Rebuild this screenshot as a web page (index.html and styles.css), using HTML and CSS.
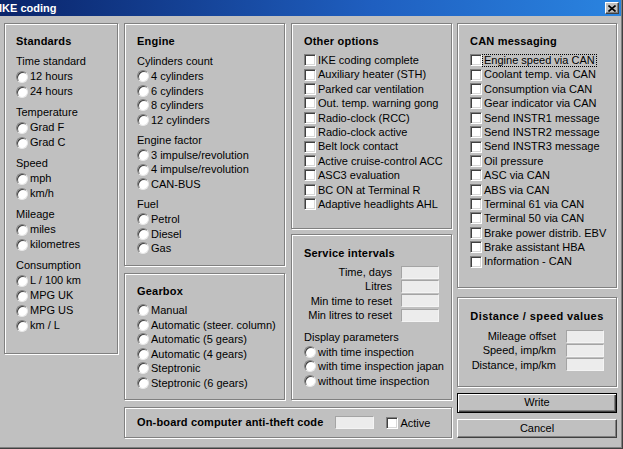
FILE: index.html
```html
<!DOCTYPE html>
<html>
<head>
<meta charset="utf-8">
<link rel="stylesheet" href="styles.css">
</head>
<body>
<div class="window">
  <div class="titlebar">
    <span class="title">IKE coding</span>
    <span class="close"><svg width="8" height="7" viewBox="0 0 8 7"><path d="M0.5 0.5 L7.5 6.5 M7.5 0.5 L0.5 6.5" stroke="#000" stroke-width="1.6" fill="none"/></svg></span>
  </div>
  <div class="client">
    <div class="col col1">
      <div class="group standards">
        <div class="heading">Standards</div>
        <div class="label">Time standard</div>
        <div class="row"><span class="radio"></span>12 hours</div>
        <div class="row"><span class="radio"></span>24 hours</div>
        <div class="label">Temperature</div>
        <div class="row"><span class="radio"></span>Grad F</div>
        <div class="row"><span class="radio"></span>Grad C</div>
        <div class="label">Speed</div>
        <div class="row"><span class="radio"></span>mph</div>
        <div class="row"><span class="radio"></span>km/h</div>
        <div class="label">Mileage</div>
        <div class="row"><span class="radio"></span>miles</div>
        <div class="row"><span class="radio"></span>kilometres</div>
        <div class="label">Consumption</div>
        <div class="row"><span class="radio"></span>L / 100 km</div>
        <div class="row"><span class="radio"></span>MPG UK</div>
        <div class="row"><span class="radio"></span>MPG US</div>
        <div class="row"><span class="radio"></span>km / L</div>
      </div>
    </div>
    <div class="mid">
      <div class="mid-top">
        <div class="col">
          <div class="group engine">
            <div class="heading">Engine</div>
            <div class="label">Cylinders count</div>
            <div class="row"><span class="radio"></span>4 cylinders</div>
            <div class="row"><span class="radio"></span>6 cylinders</div>
            <div class="row"><span class="radio"></span>8 cylinders</div>
            <div class="row"><span class="radio"></span>12 cylinders</div>
            <div class="label">Engine factor</div>
            <div class="row"><span class="radio"></span>3 impulse/revolution</div>
            <div class="row"><span class="radio"></span>4 impulse/revolution</div>
            <div class="row"><span class="radio"></span>CAN-BUS</div>
            <div class="label">Fuel</div>
            <div class="row"><span class="radio"></span>Petrol</div>
            <div class="row"><span class="radio"></span>Diesel</div>
            <div class="row"><span class="radio"></span>Gas</div>
          </div>
          <div class="group gearbox">
            <div class="heading">Gearbox</div>
            <div class="row"><span class="radio"></span>Manual</div>
            <div class="row"><span class="radio"></span>Automatic (steer. column)</div>
            <div class="row"><span class="radio"></span>Automatic (5 gears)</div>
            <div class="row"><span class="radio"></span>Automatic (4 gears)</div>
            <div class="row"><span class="radio"></span>Steptronic</div>
            <div class="row"><span class="radio"></span>Steptronic (6 gears)</div>
          </div>
        </div>
        <div class="col">
          <div class="group other">
            <div class="heading">Other options</div>
            <div class="checks">
              <div class="crow"><span class="check"></span>IKE coding complete</div>
              <div class="crow"><span class="check"></span>Auxiliary heater (STH)</div>
              <div class="crow"><span class="check"></span>Parked car ventilation</div>
              <div class="crow"><span class="check"></span>Out. temp. warning gong</div>
              <div class="crow"><span class="check"></span>Radio-clock (RCC)</div>
              <div class="crow"><span class="check"></span>Radio-clock active</div>
              <div class="crow"><span class="check"></span>Belt lock contact</div>
              <div class="crow"><span class="check"></span>Active cruise-control ACC</div>
              <div class="crow"><span class="check"></span>ASC3 evaluation</div>
              <div class="crow"><span class="check"></span>BC ON at Terminal R</div>
              <div class="crow"><span class="check"></span>Adaptive headlights AHL</div>
            </div>
          </div>
          <div class="group service">
            <div class="heading">Service intervals</div>
            <div class="fields">
              <div class="frow"><span class="flabel">Time, days</span><span class="field"></span></div>
              <div class="frow"><span class="flabel">Litres</span><span class="field"></span></div>
              <div class="frow"><span class="flabel">Min time to reset</span><span class="field"></span></div>
              <div class="frow"><span class="flabel">Min litres to reset</span><span class="field"></span></div>
            </div>
            <div class="label display">Display parameters</div>
            <div class="row"><span class="radio"></span>with time inspection</div>
            <div class="row"><span class="radio"></span>with time inspection japan</div>
            <div class="row"><span class="radio"></span>without time inspection</div>
          </div>
        </div>
      </div>
      <div class="group antitheft">
        <span class="heading">On-board computer anti-theft code</span>
        <span class="field code"></span>
        <span class="check"></span><span>Active</span>
      </div>
    </div>
    <div class="col col4">
      <div class="group can">
        <div class="heading">CAN messaging</div>
        <div class="checks">
          <div class="crow"><span class="check"></span><span class="focus">Engine speed via CAN</span></div>
          <div class="crow"><span class="check"></span>Coolant temp. via CAN</div>
          <div class="crow"><span class="check"></span>Consumption via CAN</div>
          <div class="crow"><span class="check"></span>Gear indicator via CAN</div>
          <div class="crow"><span class="check"></span>Send INSTR1 message</div>
          <div class="crow"><span class="check"></span>Send INSTR2 message</div>
          <div class="crow"><span class="check"></span>Send INSTR3 message</div>
          <div class="crow"><span class="check"></span>Oil pressure</div>
          <div class="crow"><span class="check"></span>ASC via CAN</div>
          <div class="crow"><span class="check"></span>ABS via CAN</div>
          <div class="crow"><span class="check"></span>Terminal 61 via CAN</div>
          <div class="crow"><span class="check"></span>Terminal 50 via CAN</div>
          <div class="crow"><span class="check"></span>Brake power distrib. EBV</div>
          <div class="crow"><span class="check"></span>Brake assistant HBA</div>
          <div class="crow"><span class="check"></span>Information - CAN</div>
        </div>
      </div>
      <div class="group distance">
        <div class="heading">Distance / speed values</div>
        <div class="fields">
          <div class="frow"><span class="flabel">Mileage offset</span><span class="field"></span></div>
          <div class="frow"><span class="flabel">Speed, imp/km</span><span class="field"></span></div>
          <div class="frow"><span class="flabel">Distance, imp/km</span><span class="field"></span></div>
        </div>
      </div>
      <div class="btn default">Write</div>
      <div class="btn cancel">Cancel</div>
    </div>
  </div>
</div>
</body>
</html>
```

FILE: styles.css
```css
html, body {
  margin: 0;
  padding: 0;
}
body {
  width: 623px;
  height: 449px;
  overflow: hidden;
  background: #c0c0c0;
  font-family: "Liberation Sans", Arial, sans-serif;
  font-size: 11px;
  color: #000;
}
.window {
  width: 623px;
  height: 449px;
  box-sizing: border-box;
  background: #c0c0c0;
  box-shadow: inset -1px -1px 0 #404040, inset -2px -2px 0 #808080;
}
.titlebar {
  height: 16px;
  width: 621px;
  background: linear-gradient(to right, #0a246a 0%, #1f5fc0 60%, #2a84e0 100%);
  display: flex;
  align-items: center;
  justify-content: space-between;
}
.title {
  color: #fff;
  font-weight: bold;
  font-size: 11px;
  margin-left: -1px;
  line-height: 15px;
}
.close {
  width: 14px;
  height: 12px;
  margin-right: 2px;
  background: #c0c0c0;
  box-sizing: border-box;
  border: 1px solid;
  border-color: #fff #404040 #404040 #fff;
  box-shadow: inset -1px -1px 0 #808080;
  display: flex;
  align-items: center;
  justify-content: center;
}
.client {
  display: flex;
  padding: 7px 0 0 4px;
}
.col {
  display: flex;
  flex-direction: column;
  width: 161px;
}
.col1 {
  width: 114px;
  margin-right: 6px;
}
.mid {
  width: 328px;
  margin-right: 5px;
  display: flex;
  flex-direction: column;
}
.mid-top {
  display: flex;
  gap: 6px;
}
.col4 {
  width: 160px;
}
.group {
  box-sizing: border-box;
  border: 1px solid #808080;
  box-shadow: 1px 1px 0 #fff, inset 1px 1px 0 #fff;
  padding: 11px 12px 0 12px;
}
.heading {
  font-weight: bold;
  line-height: 13px;
  height: 13px;
  margin-bottom: 5px;
  letter-spacing: 0.2px;
  white-space: nowrap;
}
.label {
  height: 16px;
  line-height: 16px;
  white-space: nowrap;
}
.row {
  display: flex;
  align-items: center;
  height: 14.5px;
  line-height: 14.5px;
  white-space: nowrap;
}
.radio {
  flex: none;
  width: 12px;
  height: 12px;
  box-sizing: border-box;
  border-radius: 50%;
  background: #fff;
  border: 1px solid;
  border-color: #808080 #e8e8e8 #e8e8e8 #808080;
  box-shadow: inset 1px 1px 0 #404040;
  margin-right: 2px;
}
.check {
  flex: none;
  width: 12px;
  height: 12px;
  box-sizing: border-box;
  background: #fff;
  border: 1px solid;
  border-color: #808080 #fff #fff #808080;
  box-shadow: inset 1px 1px 0 #404040, inset -1px -1px 0 #d8d8d8;
  margin-right: 2px;
}
.standards {
  height: 331px;
  padding-left: 11px;
}
.standards .row {
  height: 15px;
  line-height: 15px;
}
.standards .row + .label {
  margin-top: 5px;
}
.engine {
  height: 243px;
}
.engine .row + .label {
  margin-top: 4.75px;
}
.gearbox {
  height: 127px;
  margin-top: 7px;
}
.other {
  height: 206px;
}
.checks {
  margin-top: 1px;
}
.crow {
  display: flex;
  align-items: center;
  height: 14.4px;
  line-height: 14.4px;
  white-space: nowrap;
}
.focus {
  display: inline-block;
  line-height: 11px;
  border: 1px dotted #000;
  padding: 0 1px;
  margin-left: -2px;
}
.service {
  height: 166px;
  margin-top: 5px;
  padding-top: 12px;
}
.fields {
  margin-top: 0;
}
.frow {
  display: flex;
  align-items: center;
  height: 14.3px;
  white-space: nowrap;
}
.flabel {
  flex: 1;
  text-align: right;
}
.field {
  flex: none;
  width: 38px;
  height: 13px;
  box-sizing: border-box;
  background: #ececec;
  border: 1px solid;
  border-color: #a4a4a4 #f4f4f4 #f4f4f4 #a4a4a4;
  margin-left: 9px;
}
.service .display {
  margin-top: 6.5px;
}
.can {
  height: 265px;
}
.distance {
  height: 90px;
  margin-top: 9px;
  padding-top: 12px;
}
.distance .heading {
  text-align: center;
  letter-spacing: 0.4px;
  margin-bottom: 6px;
}
.distance .field {
  margin-left: 10px;
}
.antitheft {
  height: 31px;
  margin-top: 7px;
  padding: 0 0 0 12px;
  display: flex;
  align-items: center;
}
.antitheft .heading {
  margin: 0;
  letter-spacing: 0.15px;
}
.antitheft .code {
  width: 39px;
  margin-left: 12px;
  margin-right: 12px;
}
.btn {
  box-sizing: border-box;
  width: 160px;
  height: 20px;
  text-align: center;
  line-height: 17px;
  border: 1px solid;
  border-color: #fff #404040 #404040 #fff;
  box-shadow: inset -1px -1px 0 #808080;
}
.btn.default {
  margin-top: 6px;
  border: 1px solid #000;
  box-shadow: inset 1px 1px 0 #fff, inset -1px -1px 0 #404040, inset -2px -2px 0 #808080;
}
.btn.cancel {
  margin-top: 6px;
  height: 19px;
  line-height: 16px;
}
```
